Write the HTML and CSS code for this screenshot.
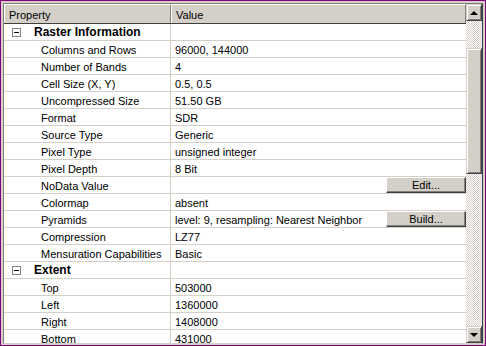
FILE: index.html
```html
<!DOCTYPE html>
<html lang="en">
<head>
    <meta charset="UTF-8">
    <title>Raster Properties</title>
    <link rel="stylesheet" href="styles.css">
</head>
<body>
    <div class="frame">
        <div class="grid">
            <div class="table">
                <div class="head">
                    <div class="hcell prop">Property</div>
                    <div class="hcell val">Value</div>
                </div>
                <div class="rows">
                    <div class="row group">
                        <div class="cell prop"><span class="toggle"></span>Raster Information</div>
                        <div class="cell val"></div>
                    </div>
                    <div class="row">
                        <div class="cell prop">Columns and Rows</div>
                        <div class="cell val">96000, 144000</div>
                    </div>
                    <div class="row">
                        <div class="cell prop">Number of Bands</div>
                        <div class="cell val">4</div>
                    </div>
                    <div class="row">
                        <div class="cell prop">Cell Size (X, Y)</div>
                        <div class="cell val">0.5, 0.5</div>
                    </div>
                    <div class="row">
                        <div class="cell prop">Uncompressed Size</div>
                        <div class="cell val">51.50 GB</div>
                    </div>
                    <div class="row">
                        <div class="cell prop">Format</div>
                        <div class="cell val">SDR</div>
                    </div>
                    <div class="row">
                        <div class="cell prop">Source Type</div>
                        <div class="cell val">Generic</div>
                    </div>
                    <div class="row">
                        <div class="cell prop">Pixel Type</div>
                        <div class="cell val">unsigned integer</div>
                    </div>
                    <div class="row">
                        <div class="cell prop">Pixel Depth</div>
                        <div class="cell val">8 Bit</div>
                    </div>
                    <div class="row">
                        <div class="cell prop">NoData Value</div>
                        <div class="cell val"><span class="text"></span><button class="btn">Edit...</button></div>
                    </div>
                    <div class="row">
                        <div class="cell prop">Colormap</div>
                        <div class="cell val">absent</div>
                    </div>
                    <div class="row">
                        <div class="cell prop">Pyramids</div>
                        <div class="cell val"><span class="text">level: 9, resampling: Nearest Neighbor</span><button class="btn">Build...</button></div>
                    </div>
                    <div class="row">
                        <div class="cell prop">Compression</div>
                        <div class="cell val">LZ77</div>
                    </div>
                    <div class="row">
                        <div class="cell prop">Mensuration Capabilities</div>
                        <div class="cell val">Basic</div>
                    </div>
                    <div class="row group">
                        <div class="cell prop"><span class="toggle"></span>Extent</div>
                        <div class="cell val"></div>
                    </div>
                    <div class="row">
                        <div class="cell prop">Top</div>
                        <div class="cell val">503000</div>
                    </div>
                    <div class="row">
                        <div class="cell prop">Left</div>
                        <div class="cell val">1360000</div>
                    </div>
                    <div class="row">
                        <div class="cell prop">Right</div>
                        <div class="cell val">1408000</div>
                    </div>
                    <div class="row">
                        <div class="cell prop">Bottom</div>
                        <div class="cell val">431000</div>
                    </div>
                </div>
            </div>
            <div class="scrollbar">
                <div class="arrow up"><span></span></div>
                <div class="track">
                    <div class="thumb"></div>
                </div>
                <div class="arrow down"><span></span></div>
            </div>
        </div>
    </div>
</body>
</html>
```

FILE: styles.css
```css
html, body {
    margin: 0;
    padding: 0;
}

body {
    width: 486px;
    height: 346px;
    overflow: hidden;
    font-family: "Liberation Sans", Arial, sans-serif;
    font-size: 11px;
    color: #000;
}

.frame {
    box-sizing: border-box;
    width: 486px;
    height: 346px;
    border: 1px solid #800080;
    background-color: #d4d0c8;
    padding: 2px 2px 1px 2px;
}

.grid {
    box-sizing: border-box;
    display: flex;
    height: 100%;
    border-top: 1px solid #808080;
    border-left: 1px solid #808080;
    border-right: 1px solid #404040;
    border-bottom: 1px solid #d4d0c8;
    background-color: #fff;
    overflow: hidden;
}

.table {
    flex: 1;
    display: flex;
    flex-direction: column;
    overflow: hidden;
}

.head {
    display: flex;
    height: 20px;
    flex-shrink: 0;
    background-color: #d4d0c8;
    border-bottom: 1px solid #404040;
    box-sizing: border-box;
}

.hcell {
    box-sizing: border-box;
    height: 19px;
    line-height: 21px;
    padding-left: 4px;
    border-top: 1px solid #fff;
    border-left: 1px solid #fff;
    border-right: 1px solid #808080;
}

.hcell.prop {
    width: 167px;
}

.hcell.val {
    flex: 1;
}

.row {
    display: flex;
    height: 17px;
    box-sizing: border-box;
    border-bottom: 1px solid #d4d0c8;
}

.cell {
    box-sizing: border-box;
    height: 16px;
    padding-top: 1px;
    line-height: 17px;
    white-space: nowrap;
    overflow: hidden;
}

.cell.prop {
    width: 167px;
    padding-left: 37px;
    border-right: 1px solid #d4d0c8;
}

.cell.val {
    flex: 1;
    display: flex;
    padding-left: 4px;
}

.cell.val .text {
    flex: 1;
}

.group .cell.prop {
    display: flex;
    align-items: center;
    padding-top: 0;
    padding-left: 8px;
    font-weight: bold;
    font-size: 12px;
}

.toggle {
    box-sizing: border-box;
    width: 9px;
    height: 9px;
    margin-right: 13px;
    border: 1px solid #808080;
    position: relative;
    background-color: #fff;
}

.toggle::after {
    content: "";
    position: absolute;
    left: 1px;
    top: 3px;
    width: 5px;
    height: 1px;
    background-color: #000;
}

.cell.val .btn {
    margin-top: -1px;
}

.btn {
    box-sizing: border-box;
    width: 80px;
    height: 16px;
    margin: 0;
    padding: 0;
    font-family: inherit;
    font-size: 11px;
    line-height: 13px;
    color: #000;
    background-color: #d4d0c8;
    border-top: 1px solid #fff;
    border-left: 1px solid #fff;
    border-right: 1px solid #404040;
    border-bottom: 1px solid #404040;
    box-shadow: inset -1px -1px 0 #808080;
}

.scrollbar {
    width: 16px;
    flex-shrink: 0;
    display: flex;
    flex-direction: column;
}

.arrow {
    box-sizing: border-box;
    height: 17px;
    flex-shrink: 0;
    background-color: #d4d0c8;
    border-top: 1px solid #d4d0c8;
    border-left: 1px solid #d4d0c8;
    border-right: 1px solid #404040;
    border-bottom: 1px solid #404040;
    box-shadow: inset 1px 1px 0 #fff, inset -1px -1px 0 #808080;
    display: flex;
    align-items: center;
    justify-content: center;
}

.arrow span {
    width: 0;
    height: 0;
    border-left: 4px solid transparent;
    border-right: 4px solid transparent;
}

.arrow.up span {
    border-bottom: 4px solid #000;
}

.arrow.down span {
    border-top: 4px solid #000;
}

.track {
    flex: 1;
    padding-top: 27px;
    background-color: #fff;
    background-image: repeating-conic-gradient(#d4d0c8 0 25%, #fff 0 50%);
    background-size: 2px 2px;
}

.thumb {
    box-sizing: border-box;
    height: 126px;
    background-color: #d4d0c8;
    border-top: 1px solid #d4d0c8;
    border-left: 1px solid #d4d0c8;
    border-right: 1px solid #404040;
    border-bottom: 1px solid #404040;
    box-shadow: inset 1px 1px 0 #fff, inset -1px -1px 0 #808080;
}
```
